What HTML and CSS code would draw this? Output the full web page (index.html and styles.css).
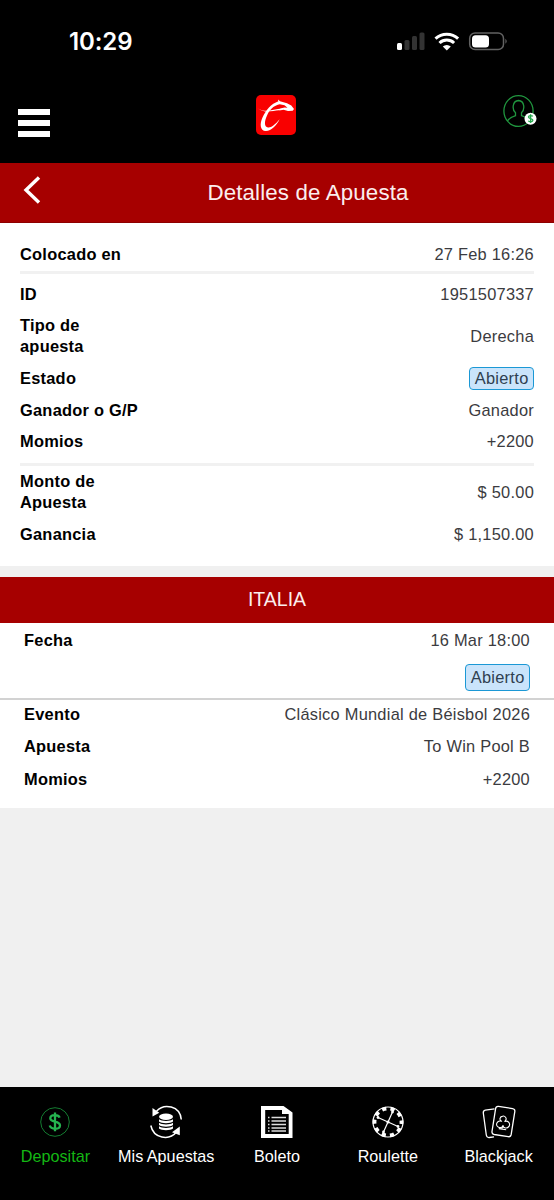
FILE: index.html
```html
<!DOCTYPE html>
<html lang="es">
<head>
<meta charset="utf-8">
<title>Detalles de Apuesta</title>
<link rel="stylesheet" href="styles.css">
</head>
<body>
<div class="app">
  <div class="status">
    <span class="clock">10:29</span>
    <svg class="signals" width="114" height="20" viewBox="0 0 114 20">
      <rect x="1" y="11" width="5" height="7" rx="1.5" fill="#fff"/>
      <g fill="#333"><rect x="8.5" y="8" width="5" height="10" rx="1.5"/><rect x="16" y="4" width="5" height="14" rx="1.5"/><rect x="23.5" y="0.5" width="5" height="17.500" rx="1.5"/></g>
      <g fill="none" stroke="#fff" stroke-width="3"><path d="M39.500 6.700a16.500 16.500 0 0 1 22.600 0"/><path d="M43.500 11a10.600 10.600 0 0 1 14.600 0"/></g>
      <path d="M46.800 14.600a5.800 5.800 0 0 1 8 0l-4 3.900z" fill="#fff"/>
      <rect x="73.700" y="1" width="33.800" height="16.600" rx="5.400" fill="none" stroke="#626262" stroke-width="1.500"/>
      <rect x="76" y="3.200" width="17" height="12.200" rx="3.500" fill="#fff"/>
      <path d="M109.500 6.700q2.200 2.500 0 5z" fill="#777"/>
    </svg>
  </div>
  <header class="header">
    <div class="menu"><i></i><i></i><i></i></div>
    <svg class="logo" width="40" height="40" viewBox="0 0 40 40">
      <rect width="40" height="40" rx="5" fill="#f90000"/>
      <path d="M22.500 6.300C15 9 10 15 6.500 22.500 3.500 29 4 35.800 9.800 36c5.700 0 11-6 13.800-11.700-4.500 5.500-8.600 8.700-11.600 8.200-4-.8-3.700-6-1-12C13.500 15 17 11 23.500 9.300z" fill="#fff"/>
      <path d="M1.500 13.200c4 2.500 8 3 12 2.300l10-1.700 4 .2L23 15.300c-7 .7-15 3.200-21.500-2.100z" fill="#fff"/>
      <path d="m22 4.500 2 1.800 7 2 4.300 2.200 2.700 3.500-1.300 1.800-4.700.2-4.500-1.200-4.200.8 1-2 4.200-1.100 3 .2-3-2.400-6-1.300z" fill="#fff"/>
    </svg>
    <svg class="user" width="36" height="36" viewBox="0 0 36 36">
      <g fill="none" stroke="#20963f" stroke-width="1.300"><ellipse cx="16.500" cy="17" rx="14.600" ry="15.400"/><path d="M5.500 27c1.500-3 4.500-4 8-5.300v-3c-3.600-3-3.300-11.800 3-12.200 6.300.4 6.500 9.200 3 12.200v3c3.300 1.200 6 2.300 8 5.300"/></g>
      <circle cx="28.500" cy="24.700" r="6" fill="#fff"/>
      <path d="M30.800 22.400c-.6-1-4.200-1.400-4.300.5 0 2 4.400 1.300 4.400 3.400-.1 2-3.900 1.700-4.600.4M28.600 20.200v8.800" fill="none" stroke="#23a84b" stroke-width="1.300"/>
    </svg>
  </header>
  <div class="titlebar">
    <svg class="back" width="20" height="30" viewBox="0 0 20 30"><path d="M18 2.500 5 15l13 12.500" fill="none" stroke="#fff" stroke-width="3.400"/></svg>
    <h1>Detalles de Apuesta</h1>
  </div>
  <section class="summary">
    <div class="group placed">
      <div class="row"><b>Colocado en</b><span>27 Feb 16:26</span></div>
    </div>
    <div class="group info">
      <div class="row"><b>ID</b><span>1951507337</span></div>
      <div class="row tall"><b>Tipo de<br>apuesta</b><span>Derecha</span></div>
      <div class="row"><b>Estado</b><span class="tag">Abierto</span></div>
      <div class="row"><b>Ganador o G/P</b><span>Ganador</span></div>
      <div class="row"><b>Momios</b><span>+2200</span></div>
    </div>
    <div class="group money">
      <div class="row tall"><b>Monto de<br>Apuesta</b><span>$ 50.00</span></div>
      <div class="row"><b>Ganancia</b><span>$ 1,150.00</span></div>
    </div>
  </section>
  <section class="pick">
    <h2>ITALIA</h2>
    <div class="when">
      <div class="row"><b>Fecha</b><span>16 Mar 18:00</span></div>
      <div class="row state"><span class="tag large">Abierto</span></div>
    </div>
    <div class="event">
      <div class="row"><b>Evento</b><span>Clásico Mundial de Béisbol 2026</span></div>
      <div class="row"><b>Apuesta</b><span>To Win Pool B</span></div>
      <div class="row"><b>Momios</b><span>+2200</span></div>
    </div>
  </section>
  <nav class="nav">
    <div class="item active">
      <svg width="34" height="34" viewBox="0 0 34 34" fill="none"><circle cx="17" cy="17" r="14.300" stroke="#147c31" stroke-width="1"/><path d="M21.600 12.700c-1.200-3.500-9.300-3.500-9.300.6 0 4.500 9.700 2.300 9.700 7.200-.2 4.500-9 4.300-10.300 0M17 7.500v18.800" stroke="#25b34f" stroke-width="2.300"/></svg>
      <span>Depositar</span>
    </div>
    <div class="item">
      <svg width="34" height="34" viewBox="0 0 34 34"><g fill="none" stroke="#fff" stroke-width="1.500"><path d="M7.500 6.200C15-2 31 .5 32.300 14.500"/><path d="M1.800 20.500C4.500 33.500 20 36 27.500 27"/></g><path d="M3.500 3v8.500l6.800-3.800zM30.800 21.500v8.700l-7.800-3z" fill="#fff"/><ellipse cx="17" cy="11.800" rx="7" ry="3.200" fill="#fff"/><path d="M10 14.200c2.500 2.300 11.500 2.300 14 0v2.300c-2.500 2.300-11.500 2.300-14 0zM10 17.700c2.500 2.300 11.500 2.300 14 0V20c-2.500 2.300-11.500 2.300-14 0zM10 21.200c2.500 2.300 11.500 2.300 14 0v2.300c-2.500 2.300-11.500 2.300-14 0z" fill="#fff"/></svg>
      <span>Mis Apuestas</span>
    </div>
    <div class="item">
      <svg width="34" height="34" viewBox="0 0 34 34"><path d="M1 1h22.500l9 6.500V33H1zM5.200 5v24h23.500V9H22V5z" fill="#fff" fill-rule="evenodd"/><path d="M11.500 12.500H26M11.500 16H26M11.500 19.500H26M11.500 23H26M11.500 26H26" stroke="#ddd" stroke-width="1.300"/><path d="M8 12.500h1.500M8 16h1.500M8 19.500h1.500M8 23h1.500M8 26h1.500" stroke="#ddd" stroke-width="1.300"/></svg>
      <span>Boleto</span>
    </div>
    <div class="item">
      <svg width="34" height="34" viewBox="0 0 34 34" fill="none" stroke="#fff"><circle cx="17" cy="17" r="15" stroke-width="1.200"/><circle cx="17" cy="17" r="13.500" stroke-width="3.800" stroke-dasharray="4.241 4.241" stroke-dashoffset="2.120"/><path d="m21.500 7-9 20M7 12.500l20 9" stroke-width="1.200"/><g fill="#fff" stroke="none"><circle cx="21.500" cy="7" r="1.400"/><circle cx="12.500" cy="27" r="1.400"/><circle cx="7" cy="12.500" r="1.400"/><circle cx="27" cy="21.500" r="1.400"/><circle cx="17" cy="17" r="1.600"/></g></svg>
      <span>Roulette</span>
    </div>
    <div class="item">
      <svg width="34" height="34" viewBox="0 0 34 34" fill="none" stroke="#fff" stroke-width="1.300" stroke-linejoin="round"><path d="m12.500 3.900-9.200 1.200Q1 5.500 1.300 8l3 22q.5 2.800 3 2.500l4.700-.7"/><path d="m16.500 1.400 14 2.200q2.700.5 2.300 3l-3.600 22.800q-.5 2.700-3 2.300l-14-2.200q-2.600-.5-2.200-3l3.600-22.800q.4-2.600 2.900-2.300z"/><path d="M19.600 16.300c-4.500-1.500-7 4.300-3 6 2 .8 3.800-.2 4.400-1.700.2 2.500 4 3.500 6 .8 1.700-3-.8-6-4.200-5 3.200-2.900 0-5.900-2.200-5.300-3.200.7-3.500 4.200-1 5.200zM21 20.600l-1.200 3.300M16.800 23.600l7.400 1.100" stroke-width="1.100"/></svg>
      <span>Blackjack</span>
    </div>
  </nav>
</div>
</body>
</html>
```
FILE: styles.css
```css
* { box-sizing: border-box; }
body { margin: 0; background: #f0f0f0; }
.app {
  width: 554px; height: 1200px; display: flex; flex-direction: column;
  font-family: "Liberation Sans", Arial, sans-serif;
  font-size: 16.4px; line-height: 21px; letter-spacing: 0.25px; color: #3b3b40;
}
svg { display: block; flex: none; }
.status {
  height: 82px; flex: none; padding: 2px 44px 0 69px; background: #000; color: #fff;
  display: flex; justify-content: space-between; align-items: center;
}
.clock { font: 600 24px/30px Inter, sans-serif; letter-spacing: -0.1px; }
.header {
  height: 81px; flex: none; padding: 13px 15px 0 18px; background: #000;
  display: grid; grid-template-columns: 1fr 40px 1fr; align-items: start;
}
.logo { margin-left: -2.5px; }
.menu { width: 32px; padding-top: 14px; display: grid; gap: 5px; }
.menu i { height: 6px; background: #fff; }
.user { justify-self: end; margin: -1px 1px 0 0; }
.titlebar {
  height: 60px; flex: none; padding-left: 21px; background: #a60000; color: #fbeeee;
  border-bottom: 1px solid #8d0000;
  display: flex; align-items: center;
}
.back { margin-top: -6px; }
h1 { flex: 1; margin: 0 0 0 21px; text-align: center; font-size: 22.3px; line-height: 30px; font-weight: 400; letter-spacing: 0.15px; }
.summary { height: 343px; flex: none; padding: 0 20px; background: #fff; }
.group { border-bottom: 3px solid #f1f1f1; }
.placed { height: 51px; padding-top: 16px; }
.info { height: 192px; padding-top: 5px; }
.money { border: 0; margin-top: -1px; }
.row { display: flex; justify-content: space-between; align-items: center; height: 31.5px; }
.row b { color: #000; }
.row.tall { height: 53px; }
.info .row:first-child { height: 31px; }
.info .row.tall { height: 52px; }
.info .row.tall + .row { height: 33px; }
.info .row:last-child { height: 30px; }
.money .row { height: 31px; }
.money .row.tall { height: 54px; }
.tag {
  height: 23px; padding: 0 4.5px; line-height: 20px; color: #2f3f50;
  background: #cae4fb; border: 1.5px solid #1b98d5; border-radius: 4px;
}
.tag.large { height: 27px; line-height: 24px; }
.pick { margin-top: 11px; height: 231px; flex: none; background: #fff; }
h2 { margin: 0; height: 46px; background: #a60000; color: #fbeeee; text-align: center; font-size: 19.5px; line-height: 45px; font-weight: 400; letter-spacing: 0; }
.when { height: 77px; padding: 1px 24px 0; border-bottom: 2px solid #d2d2d2; }
.when .row { height: 32px; }
.when .state { justify-content: flex-end; height: 43px; }
.event { padding: 0 24px; }
.event .row { height: 33px; }
.event .row:first-child { height: 29px; margin-bottom: 1px; }
.nav {
  height: 113px; flex: none; margin-top: auto; padding-top: 18px; background: #000; color: #fff;
  display: grid; grid-template-columns: repeat(5, 1fr);
  font-size: 16.2px; letter-spacing: 0;
}
.item { display: flex; flex-direction: column; align-items: center; gap: 7px; white-space: nowrap; }
.active { color: #14b714; }
```
